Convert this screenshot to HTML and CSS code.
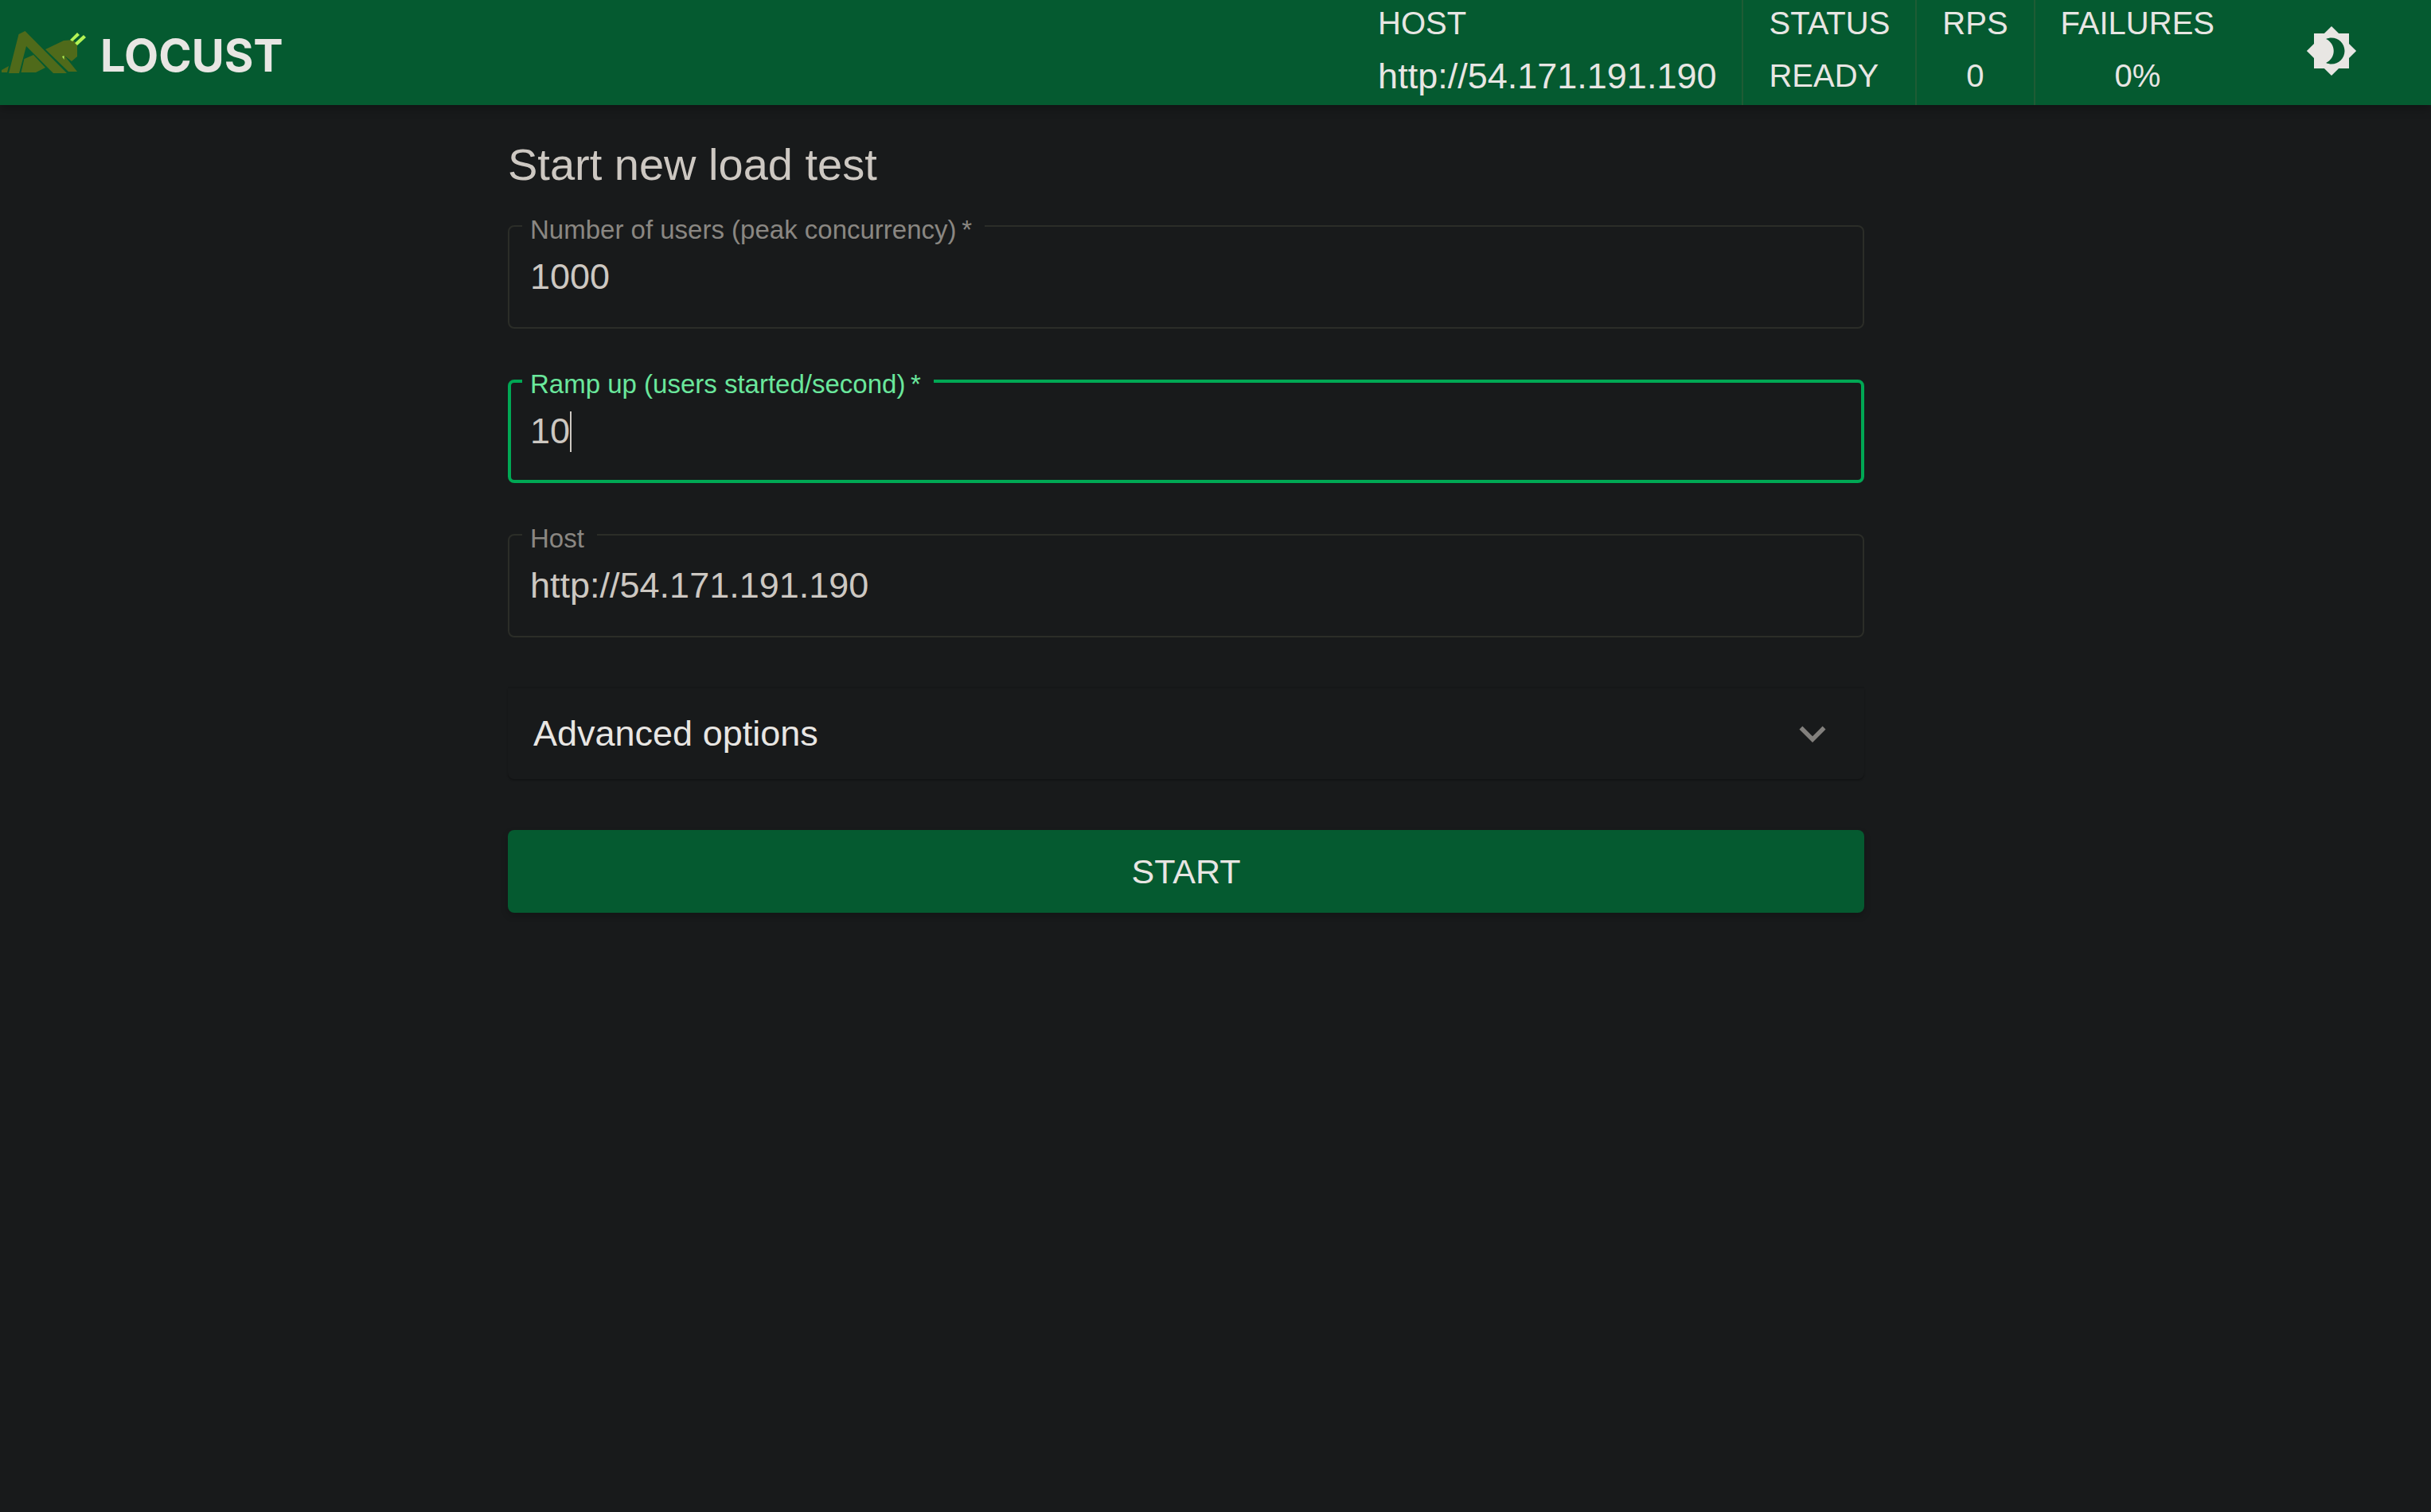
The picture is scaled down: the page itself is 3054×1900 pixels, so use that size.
FILE: index.html
```html
<!DOCTYPE html>
<html lang="en">
<head>
<meta charset="utf-8">
<meta name="viewport" content="width=device-width, initial-scale=1">
<title>Locust</title>
<link rel="stylesheet" href="styles.css">
</head>
<body>
<header class="topbar">
  <a class="brand" href="#" aria-label="Locust home">
    <svg class="brand-mark" viewBox="0 0 110 56" aria-hidden="true">
      <g fill="#4f6a1a">
        <path d="M2 50 L11 45 L9 53 L2 53 Z"/>
        <path d="M23.500 5 L31.500 1 L84 54 H67 L33 20 L24 54 H11 Z"/>
        <path d="M26.500 53 L30.500 36 L42 31 L57 47 L45 53 Z"/>
        <path d="M57 24 L80 13 L92 12 L97 19 V33 L90 39 L81 32 L97 52 H86 Z"/>
      </g>
      <path d="M80.500 37 V32 L78 33 Z M88 12 L97 3 L100 6 L91 14 Z M94 16 L105 6 L108 9 L97 19 Z" fill="#b3f355"/>
    </svg>
    <span class="brand-name">LOCUST</span>
  </a>
  <dl class="stats">
    <div class="stat stat-host"><dt>HOST</dt><dd>http://54.171.191.190</dd></div>
    <div class="stat stat-status"><dt>STATUS</dt><dd>READY</dd></div>
    <div class="stat"><dt>RPS</dt><dd>0</dd></div>
    <div class="stat"><dt>FAILURES</dt><dd>0%</dd></div>
  </dl>
  <button class="theme-toggle" type="button" aria-label="Toggle theme">
    <svg class="icon" viewBox="0 0 24 24" aria-hidden="true"><path d="M20 8.690V4h-4.690L12 .69 8.690 4H4v4.690L.69 12 4 15.310V20h4.690L12 23.310 15.310 20H20v-4.690L23.310 12 20 8.690zM12 18c-.89 0-1.740-.2-2.500-.55C11.560 16.500 13 14.420 13 12s-1.440-4.500-3.500-5.450C10.260 6.200 11.110 6 12 6c3.310 0 6 2.690 6 6s-2.690 6-6 6z"/></svg>
  </button>
</header>
<main class="page">
  <form class="panel">
    <h1 class="title">Start new load test</h1>
    <div class="fields">
      <div class="field">
        <label for="users">Number of users (peak concurrency)&thinsp;*</label>
        <input id="users" type="text" value="1000" required>
      </div>
      <div class="field field-active">
        <label for="ramp">Ramp up (users started/second)&thinsp;*</label>
        <input id="ramp" type="text" value="10" required>
        <span class="caret" aria-hidden="true"></span>
      </div>
      <div class="field">
        <label for="host">Host</label>
        <input id="host" type="text" value="http://54.171.191.190">
      </div>
    </div>
    <button class="accordion" type="button" aria-expanded="false">
      <span>Advanced options</span>
      <svg class="icon" viewBox="0 0 24 24" aria-hidden="true"><path d="M16.590 8.590 12 13.170 7.410 8.590 6 10l6 6 6-6z"/></svg>
    </button>
    <button class="start" type="submit">START</button>
  </form>
</main>
</body>
</html>
```
FILE: styles.css
```css
:root {
  --bg: #181a1b;
  --green: #055a30;
  --light: #e8e6e3;
  --text: #cdc8c2;
}

* {
  box-sizing: border-box;
}

body {
  margin: 0;
  min-height: 100vh;
  background: var(--bg);
  color: var(--text);
  font-family: "Liberation Sans", Arial, sans-serif;
  font-size: 45px;
}

button,
input {
  font: inherit;
}

button {
  border: 0;
  cursor: pointer;
}

.icon {
  display: block;
  width: 66px;
  height: 66px;
  fill: currentColor;
}

.topbar {
  display: flex;
  align-items: stretch;
  background: var(--green);
  color: var(--light);
  box-shadow: 0 4px 12px rgba(0, 0, 0, 0.3);
}

.brand {
  display: flex;
  align-items: center;
  gap: 16px;
  margin-right: auto;
  color: inherit;
  text-decoration: none;
}

.brand-mark {
  width: 110px;
  height: 56px;
}

.brand-name {
  padding-top: 8px;
  font-family: Inter, "Liberation Sans", sans-serif;
  font-size: 56px;
  font-weight: 700;
}

.stats {
  display: flex;
  margin: 0;
}

.stat {
  padding: 0 32px;
  font-size: 40px;
  text-align: center;
}

.stat + .stat {
  border-left: 2px solid #1f5c35;
}

.stat dt {
  line-height: 59px;
}

.stat dd {
  margin: 0;
  line-height: 73px;
}

.stat-host,
.stat-status {
  text-align: left;
}

.stat-host dd {
  font-size: 45px;
}

.theme-toggle {
  align-self: center;
  margin: 0 92px 5px 82px;
  padding: 0;
  background: none;
  color: inherit;
}

.page {
  padding: 39px 74px 64px 0;
}

.panel {
  display: flex;
  flex-direction: column;
  max-width: 1704px;
  margin: 0 auto;
}

.title {
  margin: 0 0 40px;
  font-size: 56px;
  font-weight: 400;
  line-height: 72px;
}

.fields {
  display: grid;
  gap: 64px;
  margin-bottom: 64px;
}

.field {
  position: relative;
}

.field label {
  position: absolute;
  top: -14px;
  left: 18px;
  padding: 0 16px 0 10px;
  background: var(--bg);
  color: #8a8782;
  font-size: 33px;
  line-height: 40px;
}

.field input {
  display: block;
  width: 100%;
  height: 130px;
  padding: 0 26px;
  border: 2px solid #2b2d28;
  border-radius: 8px;
  outline: 0;
  background: transparent;
  color: inherit;
}

.field-active label {
  color: #6ae79c;
}

.field-active input {
  padding: 0 24px;
  border: 4px solid #00a854;
}

.caret {
  position: absolute;
  top: 40px;
  left: 78px;
  width: 2px;
  height: 51px;
  background: var(--text);
}

.accordion {
  display: flex;
  align-items: center;
  justify-content: space-between;
  margin-bottom: 64px;
  padding: 24px 32px;
  border-radius: 0 0 8px 8px;
  background: var(--bg);
  box-shadow: 0 2px 2px rgba(0, 0, 0, 0.25), 0 -2px 0 rgba(0, 0, 0, 0.1);
  color: var(--light);
}

.accordion .icon {
  color: #82807d;
}

.start {
  height: 104px;
  border-radius: 8px;
  background: var(--green);
  box-shadow: 0 4px 8px rgba(0, 0, 0, 0.2);
  color: var(--light);
  font-size: 43px;
}
```
